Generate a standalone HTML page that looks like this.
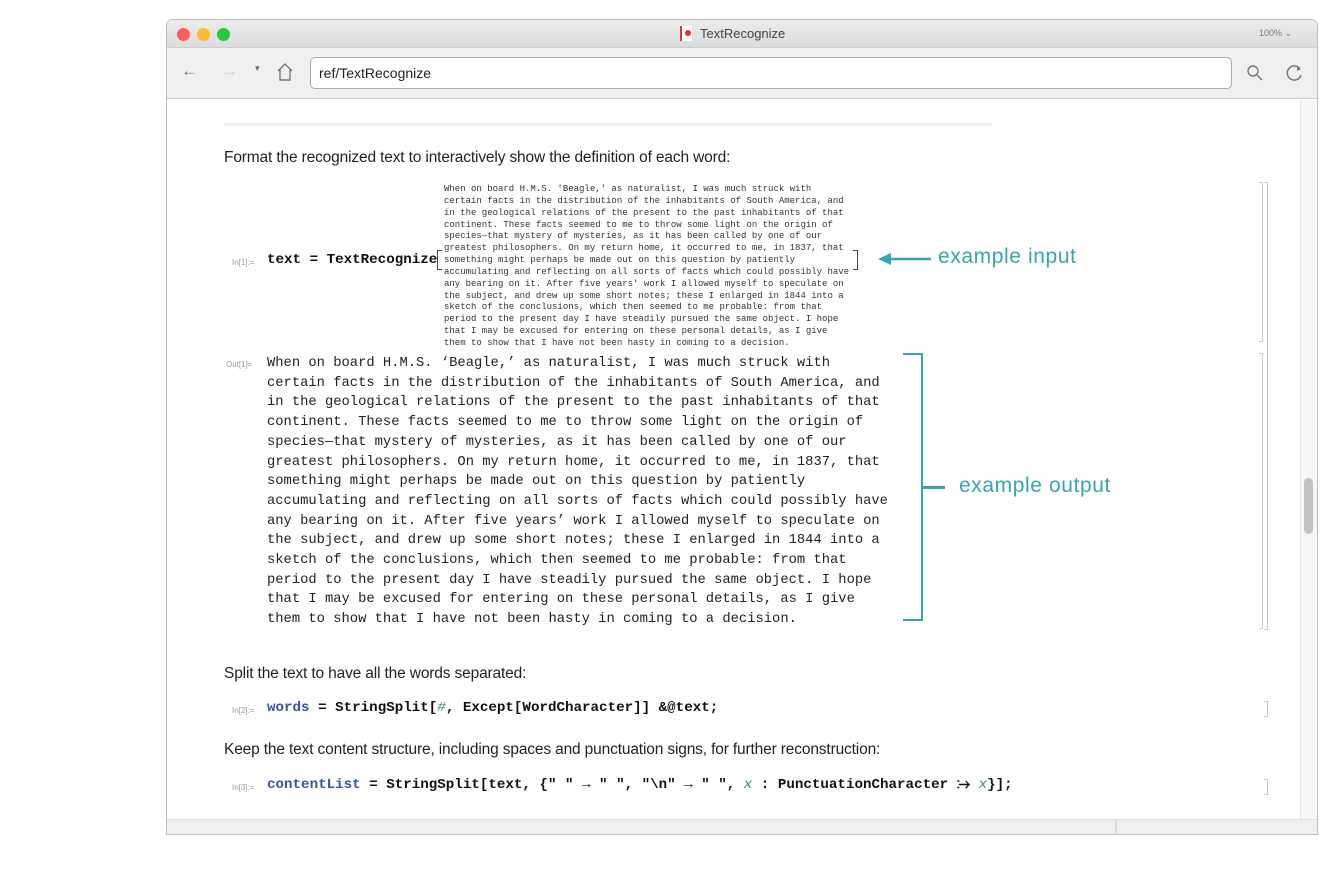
<!DOCTYPE html>
<html><head><meta charset="utf-8"><style>
*{margin:0;padding:0;box-sizing:border-box}
body{width:1340px;height:878px;background:#fff;position:relative;overflow:hidden;font-family:"Liberation Sans",sans-serif}
.a{position:absolute}
.win{left:166px;top:19px;width:1152px;height:816px;border:1px solid #bdbdbd;border-radius:7px 7px 0 0;overflow:hidden;background:#fff}
.title{left:0;top:0;width:100%;height:28px;background:linear-gradient(#ececec,#dcdcdc);border-bottom:1px solid #cfcfcf}
.tool{left:0;top:28px;width:100%;height:51px;background:#f0f0f0;border-bottom:1px solid #cacaca}
.dot{width:13px;height:13px;border-radius:50%;top:8px}
.mono{font-family:"Liberation Mono",monospace;white-space:pre}
.out{font-size:13.8px;line-height:19.7px;color:#222}
.in{font-size:9px;line-height:11.85px;color:#333;letter-spacing:0}
.txt{font-size:15.5px;color:#222;letter-spacing:-0.15px;line-height:18px}
.code{font-family:"Liberation Mono",monospace;font-weight:bold;font-size:14.2px;color:#111;white-space:pre}
.lab{font-size:8px;color:#999}
.teal{color:#36a6a9;font-size:21px;letter-spacing:0.6px}
.br{border:1px solid #c8c8c8;border-left:none;width:4px}
</style></head><body>
<div class="a win">
 <div class="a title">
  <div class="a dot" style="left:10px;background:#fe5f57"></div>
  <div class="a dot" style="left:30px;background:#febc2e"></div>
  <div class="a dot" style="left:50px;background:#28c840"></div>
  <div class="a" style="left:513px;top:6px;width:12px;height:15px;background:#fff;border-left:2px solid #d33"><div class="a" style="left:3px;top:4px;width:6px;height:6px;border-radius:50%;background:#d33"></div></div>
  <div class="a" style="left:533px;top:6px;font-size:13px;color:#444">TextRecognize</div>
  <div class="a" style="left:1092px;top:8px;font-size:9px;color:#777">100% ⌄</div>
 </div>
 <div class="a tool">
  <div class="a" style="left:14px;top:13px;font-size:17px;color:#777">←</div>
  <div class="a" style="left:54px;top:13px;font-size:17px;color:#ccc">→</div>
  <div class="a" style="left:88px;top:15px;font-size:9px;color:#666">▾</div>
  <svg class="a" style="left:108px;top:14px" width="20" height="20"><path d="M3 9 L10 2 L17 9 M5 7 V18 H15 V7" fill="none" stroke="#777" stroke-width="1.4"/></svg>
  <div class="a" style="left:143px;top:9px;width:922px;height:32px;background:#fff;border:1px solid #aaa;border-radius:5px;font-size:14px;color:#222;padding:7px 8px">ref/TextRecognize</div>
  <svg class="a" style="left:1079px;top:16px" width="18" height="18"><circle cx="7" cy="7" r="5" fill="none" stroke="#777" stroke-width="1.4"/><path d="M11 11 L16 16" stroke="#777" stroke-width="1.5"/></svg>
  <svg class="a" style="left:1118px;top:15px" width="20" height="20"><path d="M15 6 A7 7 0 1 0 16 12" fill="none" stroke="#777" stroke-width="1.5"/><path d="M12 3 L16 6 L12 8" fill="#777"/></svg>
 </div>
 <div class="a" style="left:1133px;top:80px;width:17px;height:720px;background:#f7f7f7;border-left:1px solid #e6e6e6"></div>
 <div class="a" style="left:1137px;top:458px;width:9px;height:56px;background:#c2c2c2;border-radius:5px"></div>
 <div class="a" style="left:0;top:799px;width:1150px;height:16px;background:#f0f0f0;border-top:1px solid #e0e0e0"></div>
 <div class="a" style="left:948px;top:800px;width:2px;height:15px;background:#ddd"></div>
</div>
<div class="a" style="left:224px;top:123px;width:768px;height:3px;background:#f1f1f1"></div>
<div class="a txt" style="left:224px;top:149px">Format the recognized text to interactively show the definition of each word:</div>
<div class="a lab" style="left:232px;top:258px">In[1]:=</div>
<div class="a code" style="left:267px;top:252px">text = TextRecognize</div>
<div class="a" style="left:437px;top:250px;width:5px;height:20px;border:1.5px solid #444;border-right:none"></div>
<div class="a mono in" style="left:444px;top:184px">When on board H.M.S. 'Beagle,' as naturalist, I was much struck with
certain facts in the distribution of the inhabitants of South America, and
in the geological relations of the present to the past inhabitants of that
continent. These facts seemed to me to throw some light on the origin of
species—that mystery of mysteries, as it has been called by one of our
greatest philosophers. On my return home, it occurred to me, in 1837, that
something might perhaps be made out on this question by patiently
accumulating and reflecting on all sorts of facts which could possibly have
any bearing on it. After five years' work I allowed myself to speculate on
the subject, and drew up some short notes; these I enlarged in 1844 into a
sketch of the conclusions, which then seemed to me probable: from that
period to the present day I have steadily pursued the same object. I hope
that I may be excused for entering on these personal details, as I give
them to show that I have not been hasty in coming to a decision.</div>
<div class="a" style="left:853px;top:250px;width:5px;height:20px;border:1.5px solid #444;border-left:none"></div>
<svg class="a" style="left:876px;top:251px" width="56" height="16"><path d="M2 8 L15 2 L15 14 Z" fill="#36a6a9"/><path d="M12 8 H55" stroke="#36a6a9" stroke-width="2.5"/></svg>
<div class="a teal" style="left:938px;top:245px">example input</div>
<div class="a lab" style="left:226px;top:360px">Out[1]=</div>
<div class="a mono out" style="left:267px;top:354px">When on board H.M.S. ‘Beagle,’ as naturalist, I was much struck with
certain facts in the distribution of the inhabitants of South America, and
in the geological relations of the present to the past inhabitants of that
continent. These facts seemed to me to throw some light on the origin of
species—that mystery of mysteries, as it has been called by one of our
greatest philosophers. On my return home, it occurred to me, in 1837, that
something might perhaps be made out on this question by patiently
accumulating and reflecting on all sorts of facts which could possibly have
any bearing on it. After five years’ work I allowed myself to speculate on
the subject, and drew up some short notes; these I enlarged in 1844 into a
sketch of the conclusions, which then seemed to me probable: from that
period to the present day I have steadily pursued the same object. I hope
that I may be excused for entering on these personal details, as I give
them to show that I have not been hasty in coming to a decision.</div>
<div class="a" style="left:903px;top:353px;width:20px;height:268px;border:2.5px solid #36a6a9;border-left:none"></div>
<div class="a" style="left:923px;top:486px;width:22px;height:2.5px;background:#36a6a9"></div>
<div class="a teal" style="left:959px;top:474px">example output</div>
<div class="a br" style="left:1259px;top:182px;height:160px"></div>
<div class="a br" style="left:1264px;top:182px;height:448px"></div>
<div class="a br" style="left:1259px;top:353px;height:276px"></div>
<div class="a txt" style="left:224px;top:665px">Split the text to have all the words separated:</div>
<div class="a lab" style="left:232px;top:706px">In[2]:=</div>
<div class="a code" style="left:267px;top:700px"><span style="color:#3553a8">words</span> = StringSplit[<span style="color:#3b8a5a;font-style:italic;font-weight:normal">#</span>, Except[WordCharacter]] &amp;@text;</div>
<div class="a br" style="left:1264px;top:701px;height:16px"></div>
<div class="a txt" style="left:224px;top:741px">Keep the text content structure, including spaces and punctuation signs, for further reconstruction:</div>
<div class="a lab" style="left:232px;top:783px">In[3]:=</div>
<div class="a code" style="left:267px;top:777px"><span style="color:#3553a8">contentList</span> = StringSplit[text, {" " → " ", "\n" → " ", <span style="color:#3b8a5a;font-style:italic;font-weight:normal">x</span> : PunctuationCharacter ⧴ <span style="color:#3b8a5a;font-style:italic;font-weight:normal">x</span>}];</div>
<div class="a br" style="left:1264px;top:779px;height:16px"></div>
</body></html>
